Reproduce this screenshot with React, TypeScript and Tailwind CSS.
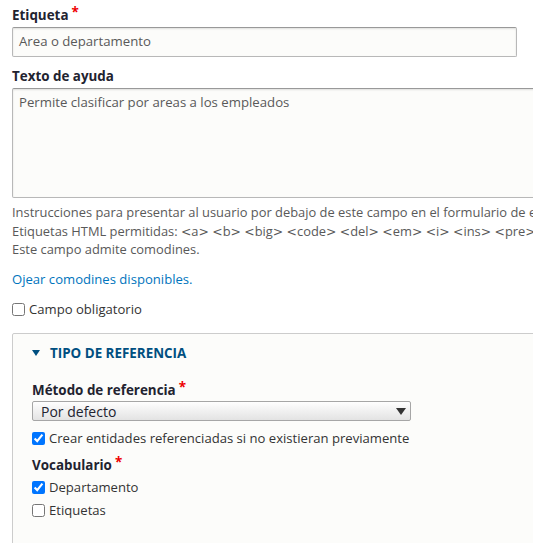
import React from "react"

const Required = () => (
  <span className="ml-[3px] text-[#e00] font-bold relative -top-[3px]">*</span>
)

type CheckProps = { label: string; checked?: boolean; className?: string }

const Check = ({ label, checked = false, className }: CheckProps) => (
  <label className={"flex items-center h-[18px] leading-[18px] text-[13.1px] text-[#333] " + (className ?? "")}>
    <input
      type="checkbox"
      defaultChecked={checked}
      className="w-[13px] h-[13px] mr-[4px] shrink-0"
    />
    <span>{label}</span>
  </label>
)

// the angle brackets are wider than Open Sans draws them
const Tag = ({ name }: { name: string }) => (
  <span>
    <span className="font-['DejaVu_Sans',sans-serif] text-[12.4px]">&lt;</span>
    {name}
    <span className="font-['DejaVu_Sans',sans-serif] text-[12.4px]">&gt;</span>{" "}
  </span>
)

const allowedTags = ["a", "b", "big", "code", "del", "em", "i", "ins", "pre", "q", "small", "span", "strong", "sub", "sup"]

export default function App() {
  return (
    <div className="h-screen w-full overflow-hidden bg-white font-['Open_Sans',sans-serif] text-[#222330]">
      <div className="w-[900px] pl-3 pt-[6px]">
        <div className="text-[13.4px] leading-[18px] font-bold">
          Etiqueta
          <Required />
        </div>
        <div className="mt-[3px] w-[505px] h-[30px] rounded-[2px] border border-[#b8b8b8] border-t-[#999] bg-[#fcfcfa] shadow-[inset_0_1px_2px_rgba(0,0,0,0.12)] px-[6px] flex items-center text-[13.2px] text-[#595959]">
          Area o departamento
        </div>

        <div className="mt-[10px] text-[13.4px] leading-[18px] font-bold">Texto de ayuda</div>
        <div className="mt-[3px] w-full h-[110px] rounded-[2px] border border-[#b8b8b8] border-t-[#999] bg-[#fcfcfa] shadow-[inset_0_1px_2px_rgba(0,0,0,0.12)] pl-[6px] pt-[4px] text-[13.2px] leading-[18px] text-[#595959]">
          Permite clasificar por areas a los empleados
        </div>

        <div className="mt-[5px] text-[12.9px] leading-[18.7px] text-[#595959] whitespace-nowrap">
          <div>Instrucciones para presentar al usuario por debajo de este campo en el formulario de edición.</div>
          <div className="h-[18.7px]">
            Etiquetas HTML permitidas:{" "}
            {allowedTags.map((t) => (
              <Tag key={t} name={t} />
            ))}
          </div>
          <div>Este campo admite comodines.</div>
        </div>

        <div className="mt-[11px] text-[13.1px] leading-[18px]">
          <a href="#" className="text-[#0074bd]">
            Ojear comodines disponibles.
          </a>
        </div>

        <Check label="Campo obligatorio" className="mt-[12px]" />

        <div className="mt-[15px] w-full rounded-[2px] border border-[#ccc] bg-[#fcfcfa] pb-[60px]">
          <div className="mt-[10px] pl-[19px] flex items-center h-[18px] text-[13.4px] font-bold text-[#004f80] uppercase">
            <svg width="8" height="6" viewBox="0 0 8 6" className="mr-[10px]">
              <polygon points="0,0 8,0 4,6" fill="#004f80" />
            </svg>
            Tipo de referencia
          </div>

          <div className="pl-[19px]">
            <div className="mt-[19px] text-[13.4px] leading-[18px] font-bold">
              Método de referencia
              <Required />
            </div>
            <div className="mt-[2px] w-[379px] h-[20px] rounded-[2px] border border-[#a6a6a6] bg-gradient-to-b from-[#fefefe] to-[#e3e3e3] flex items-center justify-between pl-[8px] pr-[4px] text-[14px] text-[#222330]">
              <span>Por defecto</span>
              <svg width="10" height="7" viewBox="0 0 10 7">
                <polygon points="0,0 10,0 5,7" fill="#333" />
              </svg>
            </div>

            <Check label="Crear entidades referenciadas si no existieran previamente" checked className="mt-[8px]" />

            <div className="mt-[9px] text-[13.4px] leading-[18px] font-bold">
              Vocabulario
              <Required />
            </div>
            <Check label="Departamento" checked className="mt-[4px]" />
            <Check label="Etiquetas" className="mt-[5px]" />
          </div>
        </div>
      </div>
    </div>
  )
}
